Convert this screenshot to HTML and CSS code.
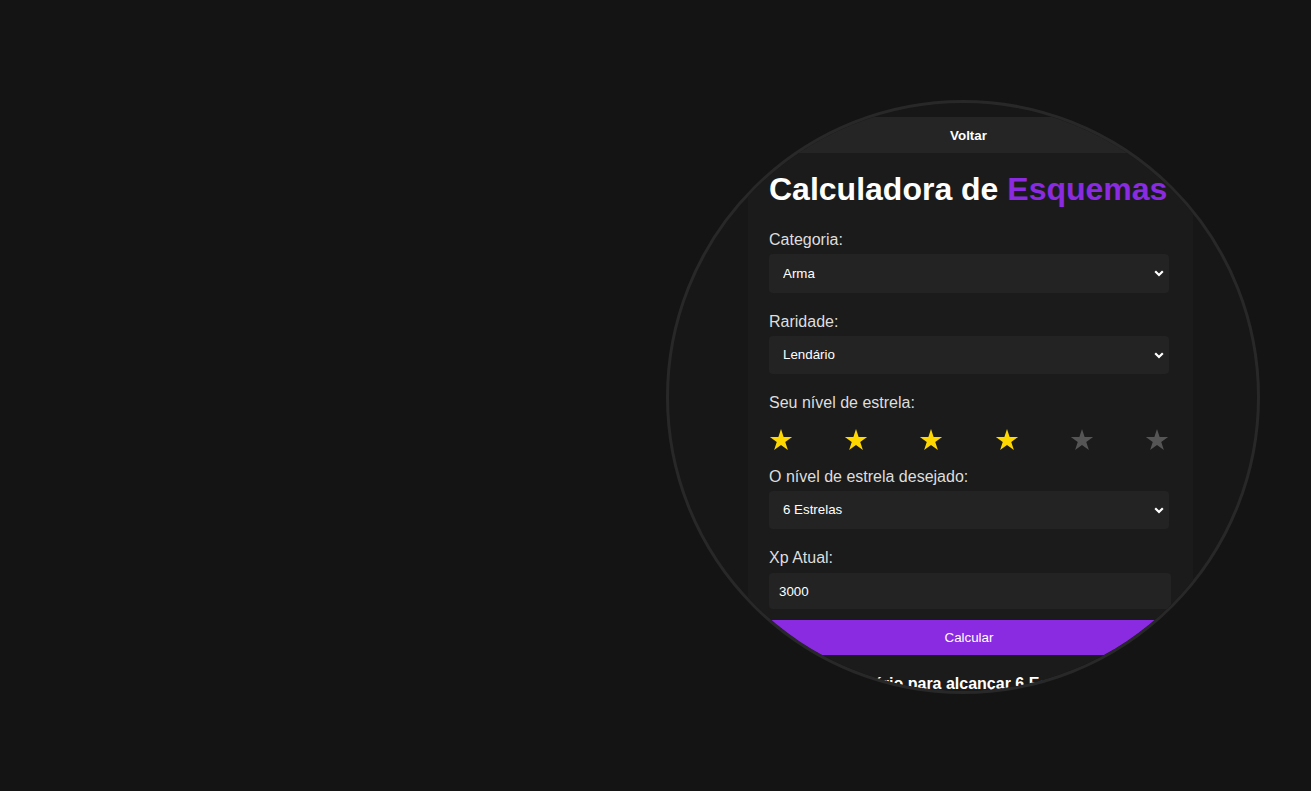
FILE: index.html
```html
<!DOCTYPE html>
<html lang="pt">
<head>
<meta charset="utf-8">
<title>Calculadora de Esquemas</title>
<link rel="stylesheet" href="styles.css">
</head>
<body>
<div class="lens">
  <div class="page">
    <button class="nav-back" type="button">Voltar</button>
    <main class="card">
      <h1 class="title">Calculadora de <span class="accent">Esquemas</span></h1>

      <div class="field">
        <label class="label" for="cat">Categoria:</label>
        <div class="select-wrap">
          <select id="cat" class="select"><option>Arma</option></select>
          <svg class="chev" width="10" height="7" viewBox="0 0 10 7"><polyline points="1.2,1.2 5,5 8.8,1.2" fill="none" stroke="#fff" stroke-width="2.2"/></svg>
        </div>
      </div>

      <div class="field">
        <label class="label" for="rar">Raridade:</label>
        <div class="select-wrap">
          <select id="rar" class="select"><option>Lendário</option></select>
          <svg class="chev" width="10" height="7" viewBox="0 0 10 7"><polyline points="1.2,1.2 5,5 8.8,1.2" fill="none" stroke="#fff" stroke-width="2.2"/></svg>
        </div>
      </div>

      <div class="field field-stars">
        <span class="label">Seu nível de estrela:</span>
        <div class="stars">
          <svg class="star on" width="24" height="24" viewBox="0 0 24 24"><polygon points="12,0.9 14.63,8.98 23.13,8.98 16.25,13.98 18.88,22.07 12,17.07 5.12,22.07 7.75,13.98 0.87,8.98 9.37,8.98"/></svg>
          <svg class="star on" width="24" height="24" viewBox="0 0 24 24"><polygon points="12,0.9 14.63,8.98 23.13,8.98 16.25,13.98 18.88,22.07 12,17.07 5.12,22.07 7.75,13.98 0.87,8.98 9.37,8.98"/></svg>
          <svg class="star on" width="24" height="24" viewBox="0 0 24 24"><polygon points="12,0.9 14.63,8.98 23.13,8.98 16.25,13.98 18.88,22.07 12,17.07 5.12,22.07 7.75,13.98 0.87,8.98 9.37,8.98"/></svg>
          <svg class="star on" width="24" height="24" viewBox="0 0 24 24"><polygon points="12,0.9 14.63,8.98 23.13,8.98 16.25,13.98 18.88,22.07 12,17.07 5.12,22.07 7.75,13.98 0.87,8.98 9.37,8.98"/></svg>
          <svg class="star" width="24" height="24" viewBox="0 0 24 24"><polygon points="12,0.9 14.63,8.98 23.13,8.98 16.25,13.98 18.88,22.07 12,17.07 5.12,22.07 7.75,13.98 0.87,8.98 9.37,8.98"/></svg>
          <svg class="star" width="24" height="24" viewBox="0 0 24 24"><polygon points="12,0.9 14.63,8.98 23.13,8.98 16.25,13.98 18.88,22.07 12,17.07 5.12,22.07 7.75,13.98 0.87,8.98 9.37,8.98"/></svg>
        </div>
      </div>

      <div class="field">
        <label class="label" for="des">O nível de estrela desejado:</label>
        <div class="select-wrap">
          <select id="des" class="select"><option>6 Estrelas</option></select>
          <svg class="chev" width="10" height="7" viewBox="0 0 10 7"><polyline points="1.2,1.2 5,5 8.8,1.2" fill="none" stroke="#fff" stroke-width="2.2"/></svg>
        </div>
      </div>

      <div class="field field-last">
        <label class="label label-xp" for="xp">Xp Atual:</label>
        <input id="xp" class="input" type="text" value="3000">
      </div>

      <button class="calc" type="button">Calcular</button>

      <p class="result">Xp necessário para alcançar 6 Estrelas: 27000</p>
    </main>
  </div>
</div>
</body>
</html>
```

FILE: styles.css
```css
html, body {
  margin: 0;
  padding: 0;
}

body {
  width: 1311px;
  height: 791px;
  background: #141414;
  font-family: "Liberation Sans", Arial, sans-serif;
  color: #fff;
  overflow: hidden;
  position: relative;
}

.lens {
  position: absolute;
  left: 666px;
  top: 100px;
  width: 594px;
  height: 594px;
  box-sizing: border-box;
  border: 3px solid #282828;
  border-radius: 50%;
  overflow: hidden;
  background: #171717;
}

.page {
  width: 599px;
  padding-top: 14px;
}

.nav-back {
  display: block;
  width: 100%;
  height: 36px;
  margin: 0;
  padding: 0;
  border: none;
  background: #252525;
  color: #fff;
  font-family: "Liberation Sans", Arial, sans-serif;
  font-size: 13.333px;
  font-weight: bold;
}

.card {
  width: 402px;
  margin-left: 79px;
  padding: 18px 22px 30px 21px;
  background: #1b1b1b;
}

.title {
  margin: 0 0 23px 0;
  font-size: 32px;
  font-weight: bold;
  line-height: normal;
  color: #fff;
  white-space: nowrap;
}

.accent {
  color: #8a2be2;
}

.field {
  margin-bottom: 20px;
}

.field-stars {
  margin-bottom: 15.5px;
}

.field-last {
  margin-bottom: 11px;
}

.label {
  display: block;
  margin-bottom: 5px;
  font-size: 16px;
  line-height: normal;
  color: #dedede;
}

.label-xp {
  margin-bottom: 6px;
}

.select-wrap {
  position: relative;
  width: 400px;
}

.select {
  display: block;
  width: 400px;
  height: 38.5px;
  margin: 0;
  padding: 0 30px 0 14px;
  border: none;
  border-radius: 4px;
  background: #232323;
  color: #fff;
  font-family: "Liberation Sans", Arial, sans-serif;
  font-size: 13.333px;
  appearance: none;
  -webkit-appearance: none;
  outline: none;
}

.chev {
  position: absolute;
  right: 5px;
  top: 16px;
}

.stars {
  display: flex;
  justify-content: space-between;
  align-items: flex-start;
  width: 400px;
  padding-top: 11px;
  height: 24px;
}

.star {
  display: block;
  fill: #555555;
}

.star.on {
  fill: #ffd700;
}

.input {
  display: block;
  box-sizing: border-box;
  width: 402px;
  height: 36px;
  margin: 0;
  padding: 0 10px;
  border: none;
  border-radius: 4px;
  background: #232323;
  color: #fff;
  font-family: "Liberation Sans", Arial, sans-serif;
  font-size: 13.333px;
  outline: none;
}

.calc {
  display: block;
  width: 400px;
  height: 34.5px;
  margin: 0;
  padding: 0;
  border: none;
  background: #8a2be2;
  color: #fff;
  font-family: "Liberation Sans", Arial, sans-serif;
  font-size: 13.333px;
}

.result {
  margin: 20px 0 0 0;
  font-size: 16px;
  font-weight: bold;
  line-height: normal;
  text-align: center;
  white-space: nowrap;
  color: #fff;
}
```
